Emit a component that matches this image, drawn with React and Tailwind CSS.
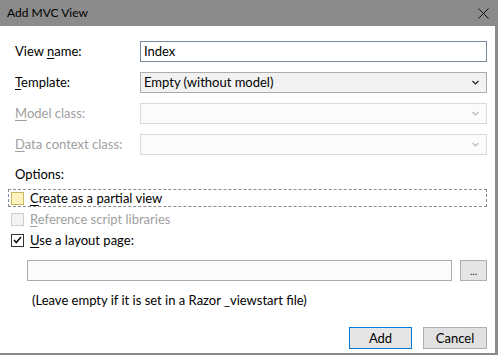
import React from 'react'

const font = { fontFamily: '"Segoe UI", Lato, "Noto Sans", sans-serif' }

function Chevron({ disabled }) {
  return (
    <svg width="7" height="5" viewBox="0 0 7 5" className="shrink-0">
      <path d="M0.5 1 L3.5 4 L6.5 1" fill="none" stroke={disabled ? '#b8b8b8' : '#222'} strokeWidth="1.2" />
    </svg>
  )
}

function Row({ label, disabled, children }) {
  return (
    <div className="flex items-center h-[21px]">
      <div className={`w-[125px] ${disabled ? 'text-[#a0a0a0]' : 'text-black'}`}>{label}</div>
      {children}
    </div>
  )
}

const U = ({ children }) => <span className="underline underline-offset-2">{children}</span>

export default function App() {
  return (
    <div className="w-[498px] h-[355px] bg-white relative text-[13px] leading-none overflow-hidden" style={font}>
      {/* title bar */}
      <div className="h-[26px] bg-[#8b8b8b] flex items-center justify-between pl-[7px] pr-[9px]">
        <span className="text-[12px] text-black">Add MVC View</span>
        <svg width="11" height="11" viewBox="0 0 11 11">
          <path d="M0.5 0.5 L10.5 10.5 M10.5 0.5 L0.5 10.5" stroke="#111" strokeWidth="1" />
        </svg>
      </div>

      <div className="absolute top-0 right-0 w-[3px] h-full bg-[#8b8b8b]" />
      <div className="absolute bottom-0 left-0 w-full h-[2px] bg-[#8b8b8b]" />

      <div className="pl-[15px] pr-[11px] pt-[15px] flex flex-col gap-[10px]">
        <Row label={<>View <U>n</U>ame:</>}>
          <div className="flex-1 h-[21px] border border-[#7a8a9e] flex items-center px-[3px] text-black">Index</div>
        </Row>
        <Row label={<><U>T</U>emplate:</>}>
          <div className="flex-1 h-[21px] border border-[#acacac] bg-[#f2f2f2] flex items-center justify-between pl-[3px] pr-[7px] text-black">
            <span>Empty (without model)</span>
            <Chevron />
          </div>
        </Row>
        <Row label={<><U>M</U>odel class:</>} disabled>
          <div className="flex-1 h-[21px] border border-[#d9d9d9] bg-[#fbfbfb] flex items-center justify-end pr-[7px]">
            <Chevron disabled />
          </div>
        </Row>
        <Row label={<><U>D</U>ata context class:</>} disabled>
          <div className="flex-1 h-[21px] border border-[#d9d9d9] bg-[#fbfbfb] flex items-center justify-end pr-[7px]">
            <Chevron disabled />
          </div>
        </Row>
      </div>

      <div className="pl-[15px] mt-[13px] text-black">Options:</div>

      <div className="ml-[8px] mr-[11px] mt-[8px] flex flex-col gap-[3px]">
        <div className="h-[18px] border border-dashed border-[#8a8a8a] flex items-center pl-[2px] gap-[6px] text-black">
          <div className="w-[13px] h-[13px] border border-[#c8b760] bg-[#fff4c0]" />
          <span><U>C</U>reate as a partial view</span>
        </div>
        <div className="h-[18px] flex items-center pl-[3px] gap-[6px] text-[#a0a0a0]">
          <div className="w-[13px] h-[13px] border border-[#cfcfcf] bg-[#f3f3f3]" />
          <span><U>R</U>eference script libraries</span>
        </div>
        <div className="h-[18px] flex items-center pl-[3px] gap-[6px] text-black">
          <div className="w-[13px] h-[13px] border border-[#333] bg-white flex items-center justify-center">
            <svg width="9" height="8" viewBox="0 0 9 8">
              <path d="M1 4 L3.3 6.5 L8 1" fill="none" stroke="#111" strokeWidth="1.6" />
            </svg>
          </div>
          <span><U>U</U>se a layout page:</span>
        </div>
      </div>

      <div className="ml-[27px] mr-[11px] mt-[11px] flex gap-[8px]">
        <div className="flex-1 h-[21px] border border-[#acacac] bg-[#fbfbfb]" />
        <div className="w-[27px] h-[21px] border border-[#adadad] bg-[#e5e5e5] flex items-center justify-center text-[10px] text-black">...</div>
      </div>

      <div className="ml-[32px] mt-[13px] text-black">(Leave empty if it is set in a Razor _viewstart file)</div>

      <div className="mr-[11px] mt-[20px] flex justify-end gap-[11px]">
        <div className="w-[63px] h-[22px] border border-[#0078d7] bg-[#e5e5e5] flex items-center justify-center text-black">Add</div>
        <div className="w-[64px] h-[22px] border border-[#adadad] bg-[#e1e1e1] flex items-center justify-center text-black">Cancel</div>
      </div>
    </div>
  )
}
